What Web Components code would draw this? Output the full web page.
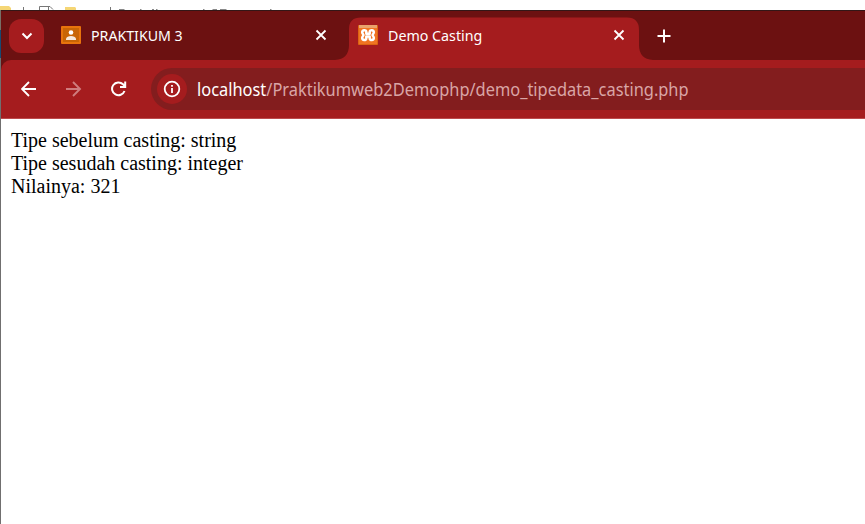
<!DOCTYPE html>
<html lang="id">
<head>
<meta charset="utf-8">
<title>Demo Casting</title>
<style>
html,body{margin:0;height:100%;overflow:hidden;background:#fff}
</style>
</head>
<body>
<browser-window></browser-window>
<script>
function define(name, html) {
  const t = document.createElement('template');
  t.innerHTML = html;
  customElements.define(name, class extends HTMLElement {
    constructor() {
      super();
      this.attachShadow({mode: 'open'}).append(t.content.cloneNode(true));
    }
  });
}

define('background-strip', `
<style>
:host{display:block;height:10px;position:relative;overflow:hidden;background:#fff;flex:none}
svg{display:block}
</style>
<svg width="865" height="10" viewBox="0 0 865 10">
  <path d="M0 6h9l2 2v2H0z" fill="#f5d675"/>
  <path d="M23.500 7v3" stroke="#777"/>
  <path d="M39.500 10V6.500H50l3 3" fill="none" stroke="#777"/><path d="M48.500 7v3" stroke="#777"/>
  <path d="M65 7h10l1 1v2H65z" fill="#f5d675"/>
  <path d="M110.500 7v3" stroke="#777"/>
  <path d="M119 9.500h5.500M140 9.500h1.500M152 9.500h2M156 9.500h1.500M203 9.500h1.500M212.500 9.500h4.500M220 9.500h6.500M270 9.500h1.500" stroke="#888"/>
</svg>`);

define('icon-button', `
<style>
:host{display:flex;align-items:center;justify-content:center;flex:none;color:#fff}
::slotted(svg){display:block}
</style><slot></slot>`);

define('browser-tab', `
<style>
:host{display:flex;align-items:center;box-sizing:border-box;height:50px;flex:none;color:#fff;font:15px/20px "Noto Sans","Open Sans",sans-serif}
.label{margin-left:10px;flex:1;white-space:nowrap;padding-bottom:2px}
.label ::slotted(span){display:inline-block;transform-origin:0 50%;transform:scaleX(var(--sx,1))}
svg{display:block;margin-bottom:1px}
::slotted(svg){margin-bottom:1px}
</style>
<slot name="icon"></slot><div class="label"><slot></slot></div>
<svg width="12" height="12" viewBox="0 0 12 12"><path d="M1.500 1.500l9 9M10.500 1.500l-9 9" stroke="#fff" stroke-width="1.800"/></svg>`);

define('tab-strip', `
<style>
:host{display:flex;position:relative;height:50px;background:#6c1111;border-top:1px solid #331717;box-sizing:border-box;flex:none}
.shape{position:absolute;left:0;top:-1px}
.row{position:relative;display:flex;align-items:center;height:49px}
.search{width:35px;height:34px;margin-left:8px;border-radius:12px;background:#a51c1e}
.one{width:266px;margin-left:17px;--sx:.945}
.two{width:267px;margin-left:31px;--sx:.95}
.plus{margin-left:32px;width:14px}
svg{display:block}
</style>
<svg class="shape" width="864" height="50" viewBox="0 0 864 50"><path d="M334 50Q348 49 348 35V19Q348 7.500 360 7.500H626Q638 7.500 638 20V35Q638 49 652 50Z" fill="#a51c1e"/></svg>
<div class="row">
<icon-button class="search"><svg width="12" height="8" viewBox="0 0 12 8"><path d="M1.500 1.500L6 6l4.500-4.500" fill="none" stroke="#fff" stroke-width="2"/></svg></icon-button>
<browser-tab class="one"><svg slot="icon" width="20" height="18" viewBox="0 0 20 18"><rect width="20" height="18" rx="1" fill="#e8740c"/><rect x="2" y="2" width="16" height="14" fill="#c96506"/><circle cx="10" cy="6.500" r="2.300" fill="#fff"/><path d="M5 14v-1.500q1-2.500 5-2.500t5 2.500V14z" fill="#f7e8dc"/></svg><span>PRAKTIKUM 3</span></browser-tab>
<browser-tab class="two"><svg slot="icon" width="20" height="20" viewBox="0 0 20 20"><rect width="20" height="20" rx="1" fill="#dc6412"/><rect x="1" y="1" width="18" height="18" fill="#f07422"/><path d="M1 0h18v3H1z" fill="#e9a36c"/><path d="M8.300 8.700V6.800C8.300 4.600 4.200 4.600 4.200 7.200C4.200 8.800 5.400 9 5.400 10S4.200 11.400 4.200 13C4.200 15.600 8.300 15.600 8.300 13.400V11.500H11.700V13.400C11.700 15.600 15.800 15.600 15.800 13C15.800 11.400 14.600 11 14.600 10S15.800 8.800 15.800 7.200C15.800 4.600 11.700 4.600 11.700 6.800V8.700Z" fill="none" stroke="#fff" stroke-width="2.500" stroke-linejoin="round"/></svg><span>Demo Casting</span></browser-tab>
<icon-button class="plus"><svg width="14" height="14" viewBox="0 0 14 14"><path d="M7 .5v13M.5 7h13" stroke="#fff" stroke-width="2"/></svg></icon-button>
</div>`);

define('address-bar', `
<style>
:host{display:flex;align-items:center;height:42px;flex:1;background:#831d1e;border-radius:21px 0 0 21px;color:#d9a5a6;font:18px/24px "Noto Sans","Open Sans",sans-serif}
.info{width:30px;height:30px;margin:0 10px 0 6px;border-radius:50%;background:#a51c1e}
.url{white-space:nowrap;transform-origin:0 50%;transform:scaleX(.911)}
b{font-weight:400;color:#fff}
svg{display:block}
</style>
<icon-button class="info"><svg width="18" height="18" viewBox="0 0 18 18"><circle cx="9" cy="9" r="7.300" fill="none" stroke="#fff" stroke-width="1.800"/><path d="M9 8v5M9 5v1.800" stroke="#fff" stroke-width="1.800"/></svg></icon-button>
<div class="url"><b>localhost</b><slot></slot></div>`);

define('tool-bar', `
<style>
:host{display:flex;align-items:center;height:59px;box-sizing:border-box;padding:0 0 1px 20px;background:#a51c1e;border-bottom:1px solid #bd4a4c;border-radius:10px 0 0 0;flex:none}
svg{display:block}
.fwd{margin-left:29px;color:#cf7c7e}
.reload{margin-left:29px}
address-bar{margin-left:24px}
</style>
<icon-button><svg width="16" height="16" viewBox="0 0 16 16"><path d="M15 8H1.500M8 1L1 8l7 7" fill="none" stroke="currentColor" stroke-width="1.900"/></svg></icon-button>
<icon-button class="fwd"><svg width="16" height="16" viewBox="0 0 16 16"><path d="M0 8H13.500M7 1l7 7-7 7" fill="none" stroke="currentColor" stroke-width="1.900"/></svg></icon-button>
<icon-button class="reload"><svg width="16" height="16" viewBox="0 0 16 16"><path d="M13.500 10A6.400 6.400 0 1 1 12 3.300L14 5.300M14.200 .5V6H9" fill="none" stroke="#fff" stroke-width="2"/></svg></icon-button>
<address-bar>/Praktikumweb2Demophp/demo_tipedata_casting.php</address-bar>`);

define('page-view', `
<style>
:host{display:block;flex:1;background:#fff;color:#000;padding:10px 0 0 10px;font:20px/23px "Liberation Serif",serif;white-space:nowrap}
</style><slot></slot>`);

define('browser-window', `
<style>
:host{display:flex;flex-direction:column;width:865px;height:524px;overflow:hidden;background:#fff}
.frame{display:flex;flex:1}
.edge{width:1px;background:linear-gradient(#777067 0 20px,#174a72 20px 48px,#706f6f 48px)}
.win{display:flex;flex-direction:column;flex:1;min-width:0}
.bars{background:#6c1111}
</style>
<background-strip></background-strip>
<div class="frame"><div class="edge"></div><div class="win">
<div class="bars"><tab-strip></tab-strip><tool-bar></tool-bar></div>
<page-view><div>Tipe sebelum casting: string</div><div>Tipe sesudah casting: integer</div><div>Nilainya: 321</div></page-view>
</div></div>`);
</script>
</body>
</html>
